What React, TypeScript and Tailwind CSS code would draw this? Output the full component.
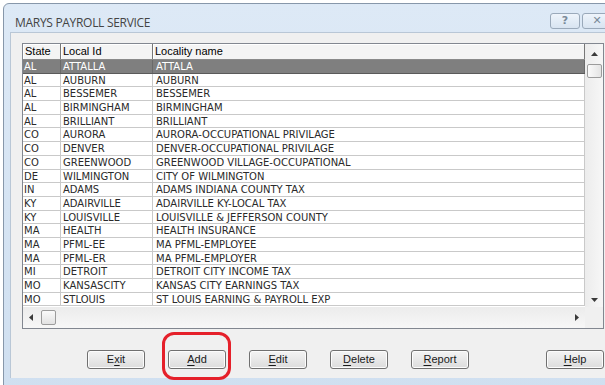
import React from "react";

const rows = [
  ["AL", "ATTALLA", "ATTALA"],
  ["AL", "AUBURN", "AUBURN"],
  ["AL", "BESSEMER", "BESSEMER"],
  ["AL", "BIRMINGHAM", "BIRMINGHAM"],
  ["AL", "BRILLIANT", "BRILLIANT"],
  ["CO", "AURORA", "AURORA-OCCUPATIONAL PRIVILAGE"],
  ["CO", "DENVER", "DENVER-OCCUPATIONAL PRIVILAGE"],
  ["CO", "GREENWOOD", "GREENWOOD VILLAGE-OCCUPATIONAL"],
  ["DE", "WILMINGTON", "CITY OF WILMINGTON"],
  ["IN", "ADAMS", "ADAMS INDIANA COUNTY TAX"],
  ["KY", "ADAIRVILLE", "ADAIRVILLE KY-LOCAL TAX"],
  ["KY", "LOUISVILLE", "LOUISVILLE & JEFFERSON COUNTY"],
  ["MA", "HEALTH", "HEALTH INSURANCE"],
  ["MA", "PFML-EE", "MA PFML-EMPLOYEE"],
  ["MA", "PFML-ER", "MA PFML-EMPLOYER"],
  ["MI", "DETROIT", "DETROIT CITY INCOME TAX"],
  ["MO", "KANSASCITY", "KANSAS CITY EARNINGS TAX"],
  ["MO", "STLOUIS", "ST LOUIS EARNING & PAYROLL EXP"],
];

// label split into [before, accessKey, after]
const buttons: [string, string, string][] = [
  ["E", "x", "it"],
  ["", "A", "dd"],
  ["", "E", "dit"],
  ["", "D", "elete"],
  ["", "R", "eport"],
];

const Arrow = ({ dir }: { dir: "up" | "down" | "left" | "right" }) => {
  const pts = {
    up: "0,4 3.5,0 7,4",
    down: "0,0 3.5,4 7,0",
    left: "4,0 0,3.5 4,7",
    right: "0,0 4,3.5 0,7",
  }[dir];
  const vertical = dir === "up" || dir === "down";
  return (
    <svg width={vertical ? 7 : 4} height={vertical ? 4 : 7} className="block">
      <polygon points={pts} fill="#3a3a3a" />
    </svg>
  );
};

const WinButton = ({ label }: { label: [string, string, string] }) => (
  <button className="w-[58px] h-[19px] rounded-[3px] border border-[#707070] bg-gradient-to-b from-[#f4f4f4] to-[#dcdcdc] shadow-[inset_0_0_0_1px_#fcfcfc] text-[11px] leading-none text-[#1a1a1a] font-['Liberation_Sans',Arial,sans-serif]">
    {label[0]}
    <span className="underline underline-offset-2">{label[1]}</span>
    {label[2]}
  </button>
);

export default function App() {
  return (
    <div className="w-[605px] h-[385px] overflow-hidden bg-white pl-[3px] pt-[3px]">
      <div className="w-[640px] h-[400px] border border-[#8797aa] rounded-t-[6px] bg-gradient-to-b from-[#dde9f6] to-[#cfdff0] flex flex-col">
        {/* Title bar */}
        <div className="h-[28px] flex items-start shrink-0">
          <span className="mt-[11px] ml-[11px] text-[12px] leading-[16px] text-[#444] tracking-[-0.3px] font-['Open_Sans','Noto_Sans',sans-serif]">
            MARYS PAYROLL SERVICE
          </span>
          <div className="ml-auto mt-[9px] mr-[30px] flex gap-[2px]">
            <div className="w-[30px] h-[16px] rounded-[3px] border border-[#9aa9ba] bg-gradient-to-b from-[#eef4fb] to-[#d8e4f1] flex items-center justify-center text-[11px] font-bold text-[#7b8a9a] font-['DejaVu_Sans',sans-serif]">
              ?
            </div>
            <div className="w-[30px] h-[16px] rounded-[3px] border border-[#9aa9ba] bg-gradient-to-b from-[#eef4fb] to-[#d8e4f1] flex items-center justify-center text-[11px] font-bold text-[#7b8a9a] font-['DejaVu_Sans',sans-serif]">
              ✕
            </div>
          </div>
        </div>

        {/* Client area */}
        <div className="ml-[6px] w-[630px] h-[346px] bg-[#f0f0f0] border-t border-l border-[#b9c7d6] shrink-0 flex flex-col">
          {/* Grid */}
          <div className="mt-[10px] ml-[11px] w-[582px] h-[286px] border border-[#828790] bg-white grid grid-cols-[562px_18px] grid-rows-[263px_21px]">
            <div className="flex flex-col overflow-hidden">
              {/* Header */}
              <div className="h-[16px] flex bg-[#f4f4f4] border-b border-[#8a8a8a] text-[11px] leading-[15px] text-black font-['Liberation_Sans',Arial,sans-serif] shrink-0">
                <div className="w-[38px] pl-[2px] border-r border-[#777] shadow-[inset_1px_1px_0_#fff]">State</div>
                <div className="w-[92px] pl-[2px] border-r border-[#777] shadow-[inset_1px_1px_0_#fff]">Local Id</div>
                <div className="flex-1 pl-[2px] border-r border-[#777] shadow-[inset_1px_1px_0_#fff]">Locality name</div>
              </div>
              {/* Rows */}
              {rows.map((r, i) => {
                const sel = i === 0;
                return (
                  <div
                    key={i}
                    className={`h-[13.7px] flex shrink-0 text-[10px] leading-[13px] font-['DejaVu_Sans',Verdana,sans-serif] border-b ${
                      sel ? "bg-[#7f7f7f] text-white border-[#5a5a5a]" : "bg-white text-[#2a2a2a] border-[#c9c9c9]"
                    }`}
                  >
                    <div className={`w-[38px] pl-[1px] border-r ${sel ? "border-[#6a6a6a]" : "border-[#c9c9c9]"}`}>{r[0]}</div>
                    <div className={`w-[92px] pl-[2px] border-r ${sel ? "border-[#6a6a6a]" : "border-[#c9c9c9]"}`}>{r[1]}</div>
                    <div className={`flex-1 pl-[3px] border-r ${sel ? "border-[#6a6a6a]" : "border-[#c9c9c9]"}`}>{r[2]}</div>
                  </div>
                );
              })}
            </div>

            {/* Vertical scrollbar */}
            <div className="bg-gradient-to-r from-[#ececec] to-[#f7f7f7] flex flex-col items-center">
              <div className="h-[20px] flex items-center justify-center">
                <Arrow dir="up" />
              </div>
              <div className="w-[15px] h-[14px] rounded-[2px] border border-[#9c9c9c] bg-gradient-to-r from-[#fafafa] to-[#e4e4e4]" />
              <div className="flex-1" />
              <div className="h-[14px] flex items-center justify-center">
                <Arrow dir="down" />
              </div>
            </div>

            {/* Horizontal scrollbar */}
            <div className="bg-gradient-to-b from-[#ececec] to-[#f7f7f7] flex items-center">
              <div className="w-[14px] flex justify-center ml-[1px]">
                <Arrow dir="left" />
              </div>
              <div className="ml-[3px] w-[15px] h-[15px] rounded-[2px] border border-[#9c9c9c] bg-gradient-to-b from-[#fafafa] to-[#e2e2e2]" />
              <div className="flex-1" />
              <div className="w-[14px] flex justify-center mr-[1px]">
                <Arrow dir="right" />
              </div>
            </div>
            <div className="bg-[#f0f0f0]" />
          </div>

          {/* Buttons */}
          <div className="mt-[16px] ml-[76px] flex items-center">
            <div className="flex gap-[23px]">
              {buttons.map((b, i) => (
                <div key={i} className="relative">
                  <WinButton label={b} />
                  {i === 1 && (
                    <div className="absolute -left-[6px] -right-[5px] -top-[13px] -bottom-[11px] border-[3px] border-[#e5202a] rounded-[12px]" />
                  )}
                </div>
              ))}
            </div>
            <div className="ml-[77px]">
              <WinButton label={["", "H", "elp"]} />
            </div>
          </div>
        </div>
      </div>
    </div>
  );
}
